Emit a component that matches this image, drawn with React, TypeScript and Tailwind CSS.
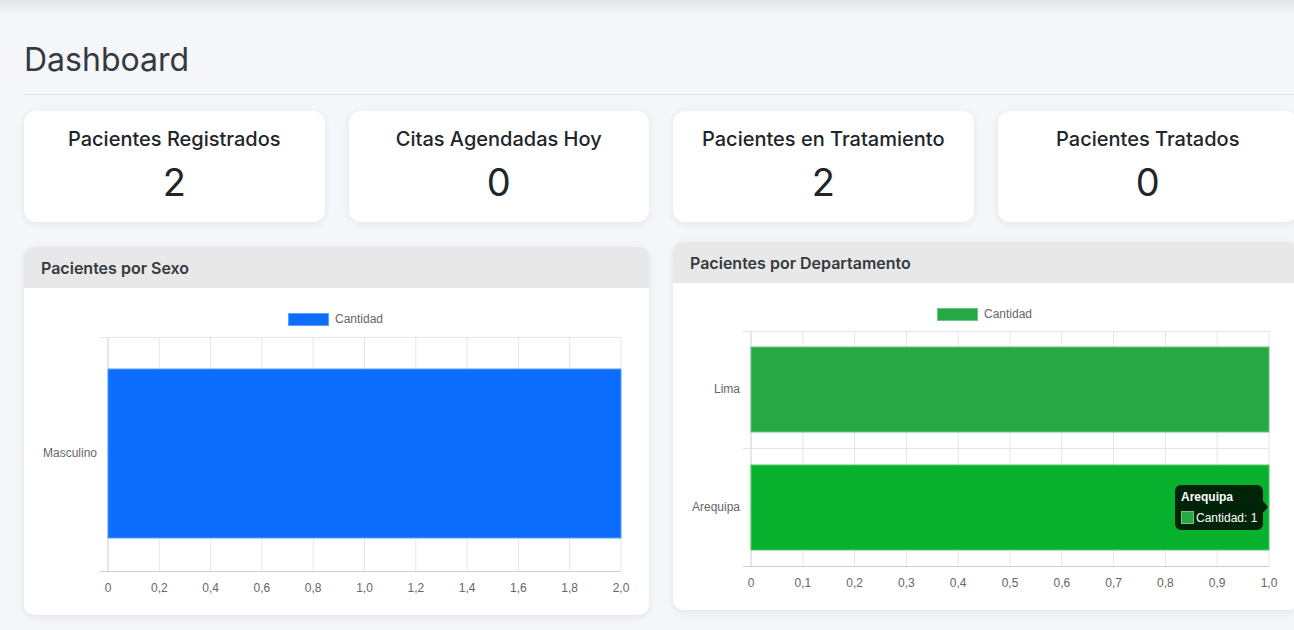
const stats = [
  { title: "Pacientes Registrados", value: 2 },
  { title: "Citas Agendadas Hoy", value: 0 },
  { title: "Pacientes en Tratamiento", value: 2 },
  { title: "Pacientes Tratados", value: 0 },
]

const fmt = (n: number) => (n === 0 ? "0" : n.toFixed(1).replace(".", ","))

function Legend({ color, border }: { color: string; border: string }) {
  return (
    <g>
      <rect x={264.5} y={25.5} width={40} height={12} fill={color} stroke={border} strokeWidth={1} />
      <text x={311} y={35} fontSize={12} fill="#666">
        Cantidad
      </text>
    </g>
  )
}

function SexoChart() {
  const x0 = 84
  const x1 = 597
  const top = 49
  const bottom = 283
  const step = (x1 - x0) / 10
  const ticks = Array.from({ length: 11 }, (_, i) => i)
  return (
    <svg viewBox="0 0 625 327" className="block h-[327px] w-full" style={{ fontFamily: '"Liberation Sans", Arial, sans-serif' }}>
      <Legend color="#0d6efd" border="#5a9cff" />
      {ticks.map((i) => (
        <line key={i} x1={x0 + i * step} x2={x0 + i * step} y1={top} y2={bottom} stroke={i === 0 ? "#cfcfcf" : "#e5e5e5"} />
      ))}
      <line x1={76} x2={x1} y1={top + 0.5} y2={top + 0.5} stroke="#e5e5e5" />
      <line x1={76} x2={x1} y1={bottom + 0.5} y2={bottom + 0.5} stroke="#cfcfcf" />
      <rect x={x0} y={81} width={x1 - x0} height={169} fill="#0d6efd" stroke="#5a9cff" strokeWidth={1} />
      {ticks.map((i) => (
        <text key={i} x={x0 + i * step} y={304} fontSize={12} fill="#666" textAnchor="middle">
          {fmt(i * 0.2)}
        </text>
      ))}
      <text x={73} y={169} fontSize={12} fill="#666" textAnchor="end">
        Masculino
      </text>
    </svg>
  )
}

function DepartamentoChart() {
  const x0 = 78
  const x1 = 596
  const top = 48
  const bottom = 283
  const step = (x1 - x0) / 10
  const ticks = Array.from({ length: 11 }, (_, i) => i)
  return (
    <svg viewBox="0 0 625 327" className="block h-[327px] w-full" style={{ fontFamily: '"Liberation Sans", Arial, sans-serif' }}>
      <Legend color="#28a745" border="#6cc582" />
      {ticks.map((i) => (
        <line key={i} x1={x0 + i * step} x2={x0 + i * step} y1={top} y2={bottom} stroke={i === 0 ? "#cfcfcf" : "#e5e5e5"} />
      ))}
      <line x1={70} x2={x1} y1={top + 0.5} y2={top + 0.5} stroke="#e5e5e5" />
      <line x1={70} x2={x1} y1={165.5} y2={165.5} stroke="#e5e5e5" />
      <line x1={70} x2={x1} y1={bottom + 0.5} y2={bottom + 0.5} stroke="#cfcfcf" />
      <rect x={x0} y={64} width={x1 - x0} height={85} fill="#28a745" stroke="#6cc582" strokeWidth={1} />
      <rect x={x0} y={182} width={x1 - x0} height={85} fill="#08b22f" stroke="#4fcb6a" strokeWidth={1} />
      {ticks.map((i) => (
        <text key={i} x={x0 + i * step} y={304} fontSize={12} fill="#666" textAnchor="middle">
          {fmt(i * 0.1)}
        </text>
      ))}
      <text x={67} y={110} fontSize={12} fill="#666" textAnchor="end">
        Lima
      </text>
      <text x={67} y={228} fontSize={12} fill="#666" textAnchor="end">
        Arequipa
      </text>
      {/* tooltip */}
      <path d="M508 202 H584 A6 6 0 0 1 590 208 V218 L595 224 L590 230 V241 A6 6 0 0 1 584 247 H508 A6 6 0 0 1 502 241 V208 A6 6 0 0 1 508 202 Z" fill="rgba(0,0,0,0.8)" />
      <text x={508} y={218} fontSize={12} fontWeight="bold" fill="#fff">
        Arequipa
      </text>
      <rect x={508.5} y={228.5} width={12} height={12} fill="#28a745" stroke="#6cc582" />
      <text x={523} y={239} fontSize={12} fill="#fff">
        Cantidad: 1
      </text>
    </svg>
  )
}

function ChartCard({ title, children, className }: { title: string; children: React.ReactNode; className?: string }) {
  return (
    <div className={`overflow-hidden rounded-[10px] bg-white shadow-[0_2px_8px_rgba(0,0,0,0.08)] ${className ?? ""}`}>
      <div className="flex h-[41px] items-center bg-[#e8e8e8] px-[17px] text-[16px] font-semibold text-[#343a40]">{title}</div>
      {children}
    </div>
  )
}

export default function App() {
  return (
    <div className="min-h-screen overflow-hidden bg-[#f4f6f9]" style={{ fontFamily: "Inter, 'Noto Sans', sans-serif" }}>
      <div className="h-[16px] bg-gradient-to-b from-[#e2e4e7] to-[#f4f6f9]" />
      <main className="w-[1298px] pl-6">
        <div className="mt-[25px] border-b border-[#dee2e6] pb-[15px]">
          <h1 className="text-[32px] leading-[38px] font-normal text-[#343a40]">Dashboard</h1>
        </div>

        <div className="mt-4 grid grid-cols-4 gap-6">
          {stats.map((s) => (
            <div key={s.title} className="rounded-xl bg-white pt-[16px] pb-[17px] text-center shadow-[0_2px_8px_rgba(0,0,0,0.07)]">
              <h3 className="text-[20px] leading-[24px] font-medium text-[#212529]">{s.title}</h3>
              <p className="mt-2 text-[38px] leading-[46px] font-normal text-[#212529]">{s.value}</p>
            </div>
          ))}
        </div>

        <div className="mt-5 grid grid-cols-2 items-start gap-6">
          <ChartCard title="Pacientes por Sexo" className="mt-[5px]">
            <SexoChart />
          </ChartCard>
          <ChartCard title="Pacientes por Departamento">
            <DepartamentoChart />
          </ChartCard>
        </div>
      </main>
    </div>
  )
}
